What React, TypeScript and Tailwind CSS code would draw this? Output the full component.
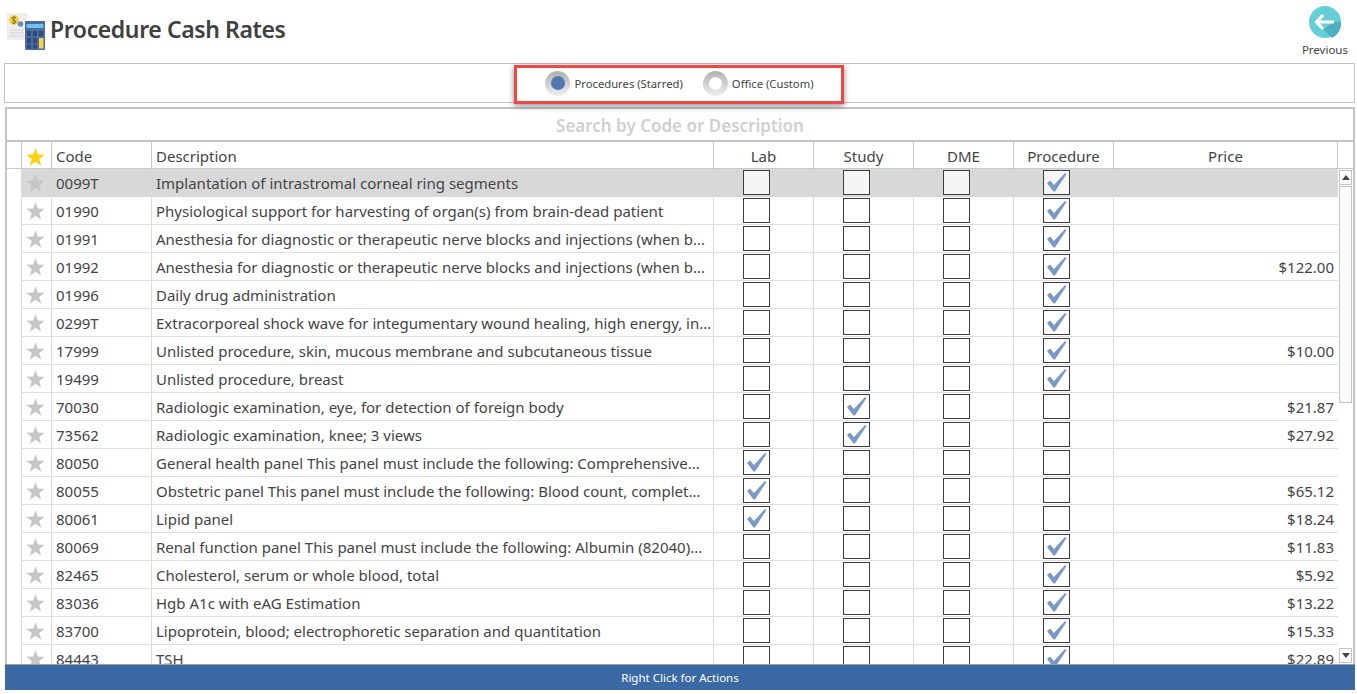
const rows = [
  { code: '0099T', desc: 'Implantation of intrastromal corneal ring segments', checks: [0, 0, 0, 1], price: '' },
  { code: '01990', desc: 'Physiological support for harvesting of organ(s) from brain-dead patient', checks: [0, 0, 0, 1], price: '' },
  { code: '01991', desc: 'Anesthesia for diagnostic or therapeutic nerve blocks and injections (when b...', checks: [0, 0, 0, 1], price: '' },
  { code: '01992', desc: 'Anesthesia for diagnostic or therapeutic nerve blocks and injections (when b...', checks: [0, 0, 0, 1], price: '$122.00' },
  { code: '01996', desc: 'Daily drug administration', checks: [0, 0, 0, 1], price: '' },
  { code: '0299T', desc: 'Extracorporeal shock wave for integumentary wound healing, high energy, in...', checks: [0, 0, 0, 1], price: '' },
  { code: '17999', desc: 'Unlisted procedure, skin, mucous membrane and subcutaneous tissue', checks: [0, 0, 0, 1], price: '$10.00' },
  { code: '19499', desc: 'Unlisted procedure, breast', checks: [0, 0, 0, 1], price: '' },
  { code: '70030', desc: 'Radiologic examination, eye, for detection of foreign body', checks: [0, 1, 0, 0], price: '$21.87' },
  { code: '73562', desc: 'Radiologic examination, knee; 3 views', checks: [0, 1, 0, 0], price: '$27.92' },
  { code: '80050', desc: 'General health panel This panel must include the following: Comprehensive...', checks: [1, 0, 0, 0], price: '' },
  { code: '80055', desc: 'Obstetric panel This panel must include the following: Blood count, complet...', checks: [1, 0, 0, 0], price: '$65.12' },
  { code: '80061', desc: 'Lipid panel', checks: [1, 0, 0, 0], price: '$18.24' },
  { code: '80069', desc: 'Renal function panel This panel must include the following: Albumin (82040)...', checks: [0, 0, 0, 1], price: '$11.83' },
  { code: '82465', desc: 'Cholesterol, serum or whole blood, total', checks: [0, 0, 0, 1], price: '$5.92' },
  { code: '83036', desc: 'Hgb A1c with eAG Estimation', checks: [0, 0, 0, 1], price: '$13.22' },
  { code: '83700', desc: 'Lipoprotein, blood; electrophoretic separation and quantitation', checks: [0, 0, 0, 1], price: '$15.33' },
  { code: '84443', desc: 'TSH', checks: [0, 0, 0, 1], price: '$22.89' },
];

function CalcIcon() {
  return (
    <svg width="40" height="44" viewBox="0 0 40 44" className="shrink-0">
      <rect x="0" y="0" width="20" height="27" fill="#eeeeee" />
      <path d="M3 17h14M3 20h14M3 23h14" stroke="#d4d4d4" strokeWidth="1" />
      <circle cx="7" cy="7" r="5" fill="#f5d33f" />
      <path d="M9 5C8 3.6 5 3.8 5 5.6S9 7.4 9 9S6 10.8 5 9.4M7 3v8" fill="none" stroke="#6a6a3a" strokeWidth="0.9" />
      <circle cx="13.5" cy="11" r="2.8" fill="#6f8cc2" />
      <rect x="18" y="8" width="20" height="29" rx="1" fill="#4f6a9c" />
      <rect x="19.5" y="11" width="17" height="4" fill="#6cc3ee" />
      <path d="M20 18h4v5h-4zM26 18h4v5h-4zM32 18h4v5h-4zM20 25h4v5h-4zM26 25h4v5h-4zM20 31.5h4v4h-4zM26 31.5h4v4h-4z" fill="#2f4a7c" />
      <rect x="32" y="25" width="4.5" height="10.5" fill="#f7d548" />
    </svg>
  );
}

function BackIcon() {
  return (
    <svg width="32" height="32" viewBox="0 0 32 32">
      <circle cx="16" cy="16" r="16" fill="#65cfd7" />
      <path d="M14 23 L23 32 A16 16 0 0 0 32 16 L25 16 Z" fill="#4fb1bf" />
      <path d="M14 9 L7.5 16 L14 23 M8 16 H25" fill="none" stroke="#ffffff" strokeWidth="3.2" />
    </svg>
  );
}

function StarIcon({ color }: { color: string }) {
  return (
    <svg width="19" height="18" viewBox="0 0 19 18" className="-ml-[2px] mt-[1px]">
      <polygon points="9.5,0 11.8,6.6 18.8,6.8 13.2,11 15.2,17.8 9.5,13.8 3.8,17.8 5.8,11 0.2,6.8 7.2,6.6" fill={color} />
    </svg>
  );
}

function Radio({ on, label }: { on?: boolean; label: string }) {
  return (
    <div className="flex items-center gap-[4px]">
      <div className="w-[25px] h-[25px] rounded-full bg-gradient-to-b from-[#b0b0b0] to-[#f0f0f0] flex items-center justify-center">
        <div className={on ? 'w-[14px] h-[14px] rounded-full bg-[#4f79b0]' : 'w-[13px] h-[13px] rounded-full bg-white'} />
      </div>
      <span className="text-[11.25px] pt-[2px] text-[#444444]">{label}</span>
    </div>
  );
}

function Box({ checked, tint }: { checked: number; tint?: boolean }) {
  return (
    <div className={`relative w-[27px] h-[25px] border border-[#3c3c3c] ${tint ? 'bg-[#f5f5f5]' : 'bg-white'}`}>
      {checked ? (
        <svg width="20" height="19" viewBox="0 0 20 19" className="absolute left-[3px] top-[2px]">
          <polygon points="0,10 3,7.5 7,12 18,0 19.5,1 8,18.5 6.5,18.5" fill="#7a9ac6" />
        </svg>
      ) : null}
    </div>
  );
}

const headCell = 'border-r border-[#c9c9c9] flex items-center pt-[2px]';
const rowCell = 'border-r border-[#d5dbe3] flex items-center';

export default function App() {
  return (
    <div className="w-[1357px] h-[694px] overflow-hidden bg-white flex flex-col text-[#444444] font-['Noto_Sans','Open_Sans',sans-serif]">
      {/* Header */}
      <div className="h-[63px] flex justify-between pl-[7px] pr-[9px] shrink-0">
        <div className="flex items-start gap-[3px] pt-[13px]">
          <CalcIcon />
          <h1 className="text-[23px] leading-[33px] tracking-[-0.4px] font-semibold text-[#404040]">Procedure Cash Rates</h1>
        </div>
        <div className="flex flex-col items-center pt-[6px]">
          <BackIcon />
          <span className="text-[11.5px] leading-[16px] mt-[4px]">Previous</span>
        </div>
      </div>

      {/* Filter */}
      <div className="relative ml-[4px] mr-[2px] h-[40px] border border-[#c4c4c4] flex items-center justify-center gap-[20px] shrink-0">
        <Radio on label="Procedures (Starred)" />
        <Radio label="Office (Custom)" />
        <div className="absolute left-[509px] top-[1px] w-[330px] h-[39px] border-[3px] border-[#f04848] shadow-[0_2px_6px_rgba(0,0,0,0.45)]" />
      </div>

      {/* Grid */}
      <div className="mt-[4px] ml-[5px] mr-[2px] border-x-2 border-t-2 border-[#c4c4c4] flex flex-col h-[557px] overflow-hidden shrink-0">
        <div className="h-[33px] pt-[2px] flex items-center justify-center text-[17px] font-semibold text-[#d0d0d0] border-b-2 border-[#c4c4c4] shrink-0">
          Search by Code or Description
        </div>
        <div className="h-[27px] flex text-[15px] border-b border-[#c9c9c9] shrink-0">
          <div className={`w-[15px] ${headCell}`} />
          <div className={`w-[30px] justify-center ${headCell}`}>
            <StarIcon color="#fdd20a" />
          </div>
          <div className={`w-[100px] pl-[4px] ${headCell}`}>Code</div>
          <div className={`w-[562px] pl-[4px] ${headCell}`}>Description</div>
          <div className={`w-[100px] justify-center ${headCell}`}>Lab</div>
          <div className={`w-[100px] justify-center ${headCell}`}>Study</div>
          <div className={`w-[100px] justify-center ${headCell}`}>DME</div>
          <div className={`w-[100px] justify-center ${headCell}`}>Procedure</div>
          <div className={`w-[224px] justify-center ${headCell}`}>Price</div>
        </div>
        <div className="flex flex-1 min-h-0">
          <div className="w-[1331px] shrink-0 overflow-hidden">
            {rows.map((r, i) => (
              <div key={r.code} className="h-[28px] flex text-[15px]">
                <div className="w-[15px] border-r border-[#d5dbe3] bg-white" />
                <div className={`w-[1316px] flex border-b ${i === 0 ? 'bg-[#d8d8d8] border-[#d8d8d8]' : 'bg-white border-[#dedede]'}`}>
                  <div className={`w-[30px] justify-center ${rowCell}`}>
                    <StarIcon color="#c6c6c6" />
                  </div>
                  <div className={`w-[100px] pl-[4px] pt-[1px] ${rowCell}`}>{r.code}</div>
                  <div className={`w-[562px] pl-[4px] pt-[1px] whitespace-nowrap overflow-hidden ${rowCell}`}>{r.desc}</div>
                  {r.checks.map((c, j) => (
                    <div key={j} className={`w-[100px] pl-[29px] ${rowCell}`}>
                      <Box checked={c} tint={i === 0} />
                    </div>
                  ))}
                  <div className="w-[224px] flex items-center justify-end pr-[4px] pt-[1px]">{r.price}</div>
                </div>
              </div>
            ))}
          </div>
          {/* Scrollbar */}
          <div className="w-[15px] shrink-0 flex flex-col bg-white">
            <div className="mx-[1px] mt-[1px] h-[15px] border border-[#c4c4c4] flex items-center justify-center">
              <div className="w-0 h-0 border-x-[4px] border-x-transparent border-b-[5px] border-b-[#444444]" />
            </div>
            <div className="mx-[1px] mt-[1px] h-[217px] border border-[#c4c4c4] bg-[#fbfbfb]" />
            <div className="flex-1" />
            <div className="mx-[1px] mb-[1px] h-[15px] border border-[#c4c4c4] flex items-center justify-center">
              <div className="w-0 h-0 border-x-[4px] border-x-transparent border-t-[5px] border-t-[#444444]" />
            </div>
          </div>
        </div>
      </div>

      {/* Footer */}
      <div className="ml-[5px] mr-[2px] h-[26px] bg-[#3a69a4] border-t border-[#9a9a9a] text-white text-[11.5px] flex items-center justify-center shrink-0">
        Right Click for Actions
      </div>
    </div>
  );
}
